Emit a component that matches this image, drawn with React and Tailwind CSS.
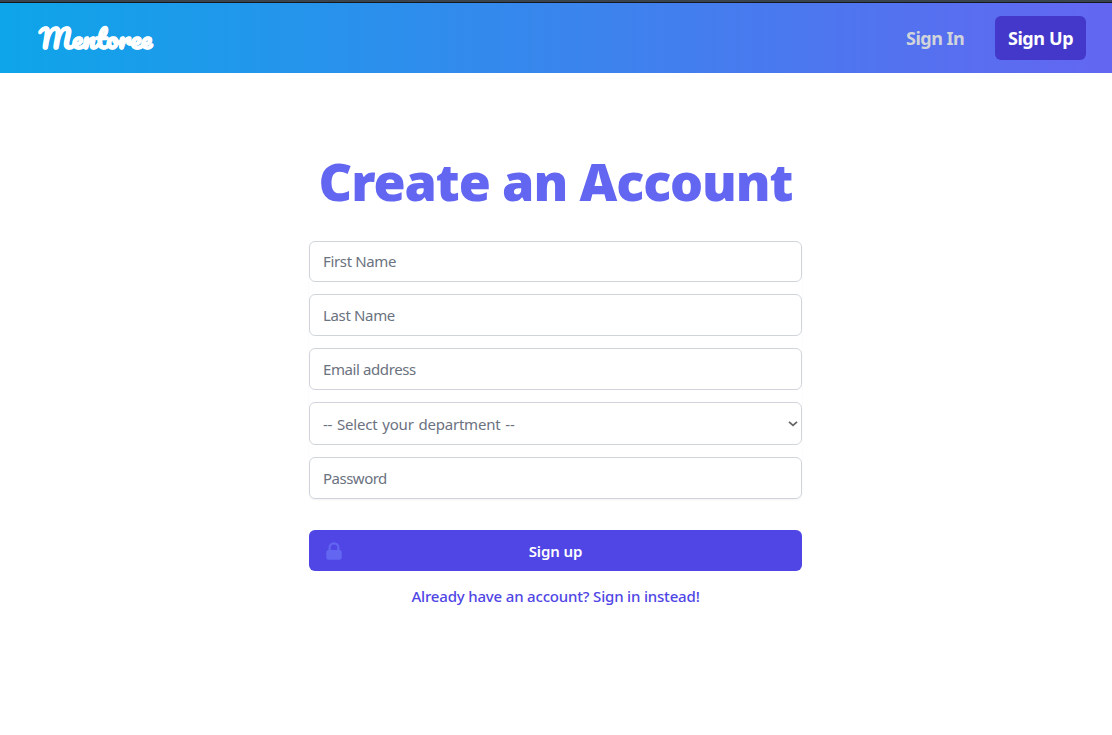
import React from 'react';

const fieldClass =
  'block w-full rounded-md border border-[#d1d5db] bg-white pl-[13px] pr-3 text-[15px] text-[#6b7280] placeholder:text-[#6b7280] placeholder:opacity-100 outline-none';

const Logo = () => (
  <a href="#" aria-label="Mentoree" className="block">
    <svg width="122" height="44" viewBox="0 0 122 44" className="block overflow-visible">
      <text
        x="3"
        y="33"
        textLength="113"
        lengthAdjust="spacingAndGlyphs"
        fill="#fff"
        stroke="#fff"
        strokeWidth="0.5"
        strokeLinejoin="round"
        className="font-['Pacifico','Liberation_Serif',cursive] text-[26px] font-bold"
      >
        Mentoree
      </text>
    </svg>
  </a>
);

const Navbar = () => (
  <header className="border-t border-[#15191e]">
    <nav className="flex h-[70px] items-center justify-between bg-linear-to-r/srgb from-[#0ea5e9] to-[#6366f1] pl-9 pr-[26px]">
      <Logo />
      <div className="flex items-center text-[18px] font-bold">
        <a href="#" className="mr-[31px] block w-[58px] whitespace-nowrap tracking-[-0.5px] text-[#d1d5db]">Sign In</a>
        <a href="#" className="flex h-11 w-[91px] items-center justify-center whitespace-nowrap rounded-md bg-[#4338ca] tracking-[-0.4px] text-white">
          Sign Up
        </a>
      </div>
    </nav>
  </header>
);

const LockIcon = () => (
  <svg width="22" height="22" viewBox="0 0 20 20" fill="currentColor" aria-hidden="true">
    <path
      fillRule="evenodd"
      clipRule="evenodd"
      d="M5 9V7a5 5 0 0110 0v2a2 2 0 012 2v5a2 2 0 01-2 2H5a2 2 0 01-2-2v-5a2 2 0 012-2zm8-2v2H7V7a3 3 0 016 0z"
    />
  </svg>
);

const SignUpForm = () => (
  <form className="w-[493px]" onSubmit={(e) => e.preventDefault()}>
    <div className="flex flex-col rounded-md shadow-[0_1px_2px_0_rgba(0,0,0,0.05)]">
      <input type="text" placeholder="First Name" className={`${fieldClass} mb-3 h-[41px] pb-0.5 tracking-[-0.35px]`} />
      <input type="text" placeholder="Last Name" className={`${fieldClass} mb-3 h-[42px] tracking-[-0.35px]`} />
      <input type="email" placeholder="Email address" className={`${fieldClass} mb-3 h-[42px] tracking-[-0.4px]`} />
      <div className="relative mb-3">
        <select defaultValue="" className={`${fieldClass} h-[43px] appearance-none pt-0.5 tracking-[-0.22px] [word-spacing:1.2px]`}>
          <option value="">-- Select your department --</option>
        </select>
        <svg width="10" height="6" viewBox="0 0 10 6" className="pointer-events-none absolute right-1 top-[19px]">
          <path d="M1 0.8 5 4.4 9 0.8" fill="none" stroke="#666" strokeWidth="1.8" />
        </svg>
      </div>
      <input type="password" placeholder="Password" className={`${fieldClass} h-[42px] tracking-[-0.5px]`} />
    </div>

    <button type="submit" className="relative mt-[31px] flex h-[41px] w-full items-center justify-center rounded-md bg-[#4f46e5] pt-0.5 text-[15px] font-semibold tracking-[-0.1px] text-white">
      <span className="absolute left-[14px] top-[10px] text-[#6366f1]">
        <LockIcon />
      </span>
      Sign up
    </button>

    <p className="mt-[14px] whitespace-nowrap text-center text-[15px] font-medium leading-[22px] tracking-[-0.18px] text-[#4f46e5]">
      <a href="#">Already have an account? Sign in instead!</a>
    </p>
  </form>
);

export default function App() {
  return (
    <div className="min-h-[735px] bg-white font-['Noto_Sans','Open_Sans',sans-serif]">
      <div className="h-0.5 bg-[#3a444e]"></div>
      <Navbar />
      <main className="flex flex-col items-center pr-px pt-[73px]">
        <h1 className="mb-[25px] whitespace-nowrap text-[52px] font-black leading-[70px] tracking-[-1.1px] text-[#6366f1]">Create an Account</h1>
        <SignUpForm />
      </main>
    </div>
  );
}
